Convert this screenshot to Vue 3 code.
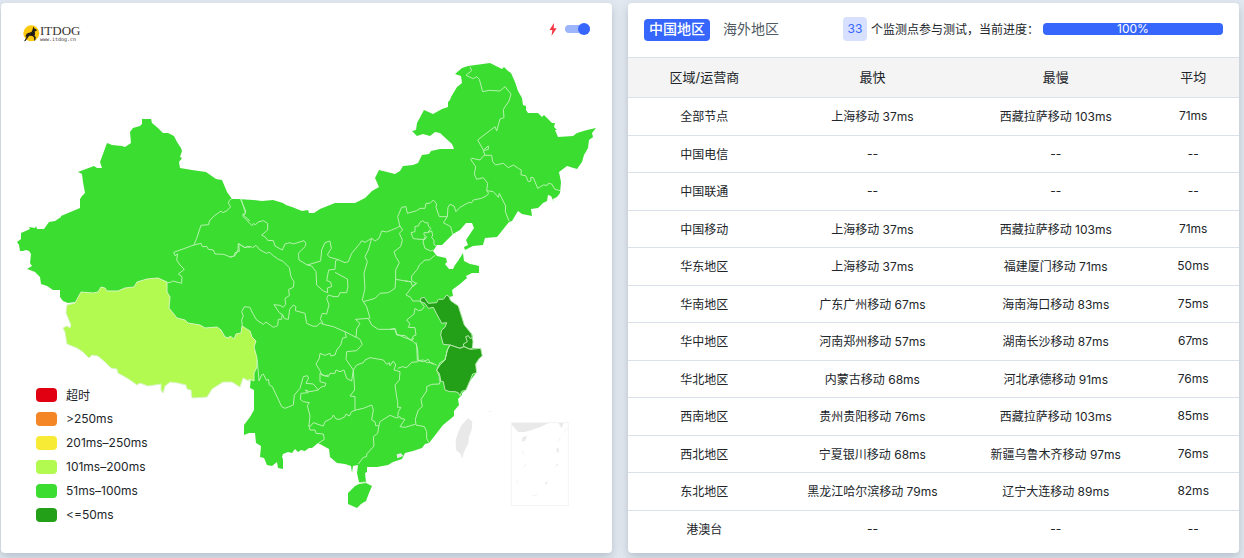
<script setup>
import { ref } from 'vue'

const legend = [
  { label: '超时', tone: 'timeout' },
  { label: '>250ms', tone: 'slow' },
  { label: '201ms–250ms', tone: 'fair' },
  { label: '101ms–200ms', tone: 'good' },
  { label: '51ms–100ms', tone: 'fast' },
  { label: '<=50ms', tone: 'best' }
]

const rows = [
  ['全部节点', '上海移动 37ms', '西藏拉萨移动 103ms', '71ms'],
  ['中国电信', '--', '--', '--'],
  ['中国联通', '--', '--', '--'],
  ['中国移动', '上海移动 37ms', '西藏拉萨移动 103ms', '71ms'],
  ['华东地区', '上海移动 37ms', '福建厦门移动 71ms', '50ms'],
  ['华南地区', '广东广州移动 67ms', '海南海口移动 83ms', '75ms'],
  ['华中地区', '河南郑州移动 57ms', '湖南长沙移动 87ms', '67ms'],
  ['华北地区', '内蒙古移动 68ms', '河北承德移动 91ms', '76ms'],
  ['西南地区', '贵州贵阳移动 76ms', '西藏拉萨移动 103ms', '85ms'],
  ['西北地区', '宁夏银川移动 68ms', '新疆乌鲁木齐移动 97ms', '76ms'],
  ['东北地区', '黑龙江哈尔滨移动 79ms', '辽宁大连移动 89ms', '82ms'],
  ['港澳台', '--', '--', '--']
]

const tabs = ['中国地区', '海外地区']
const activeTab = ref('中国地区')
const fastMode = ref(true)
const progress = 100
</script>

<template>
  <main class="page">
    <section class="card map-card">
      <header class="map-head">
        <a class="logo" href="#">
          <svg class="logo-mark" viewBox="0 0 17 17" aria-hidden="true">
            <circle cx="8.3" cy="8.3" r="8" fill="#fbc90d" />
            <path d="M10.4 1.6 11.4 3.6 13.8 4.8 13.4 5.9 11.8 6.2 12 9.2 11.5 10.7 12.8 12.2 12.2 15.6 11.2 15.5 11 12.6 9.4 11 6.2 10.8 4.8 12.8 2.5 16 1 16.2 3.2 12.8 3.4 11.2 2.2 11.6 3.9 8.6 8.4 7 9.4 5Z" fill="#201b17" />
          </svg>
          <span class="logo-text"><span class="logo-name">ITDOG</span><span class="logo-url">www.itdog.cn</span></span>
        </a>
        <label class="switch">
          <svg class="bolt" viewBox="0 0 8 13" role="img" aria-label="快速模式">
            <path d="M5 0 .5 7H3.4L2.5 13 7.6 5.3H4.7Z" fill="#f5353f" />
          </svg>
          <input v-model="fastMode" type="checkbox" />
        </label>
      </header>

      <svg class="map" viewBox="1 57 611 460" role="img" aria-label="中国地图">
        <path class="fast" d="M68 303 63 301 60 297 60 290 53 290 47 286 41 284 40 277 35 272 30 270 27 269 32 266 30 263 31 254 29 251 26 250 23 251 20 251 19 245 17 242 21 239 21 233 30 229 29 227 35 228 36 226 37 229 44 229 49 222 55 221 61 217 61 216 80 208 80 199 82 196 85 193 83 182 82 174 78 172 94 166 97 168 102 168 100 162 107 143 112 145 122 146 125 147 131 143 130 132 133 128 140 126 142 124 142 119 151 119 152 123 158 128 163 133 168 133 174 136 177 142 181 148 182 151 180 157 182 158 179 162 180 168 192 170 206 172 216 179 222 180 227 192 232 199 238 199 253 200 262 201 273 200 283 203 286 205 292 207 302 211 308 210 309 213 314 213 320 209 335 203 355 203 365 198 372 191 379 187 375 178 379 170 395 174 400 171 403 166 413 165 418 163 422 155 429 154 431 151 440 149 454 149 452 144 440 133 435 132 430 136 423 134 417 136 414 133 412 131 416 130 417 123 424 110 433 114 442 109 448 107 448 102 450 100 451 97 457 87 462 83 461 76 455 74 462 68 468 66 490 63 502 69 504 67 508 71 511 73 515 82 518 91 522 98 523 105 526 106 526 110 528 113 538 113 542 117 544 115 552 123 555 123 554 127 557 130 555 130 558 137 573 136 577 133 587 130 596 128 592 133 593 137 589 140 588 148 584 155 582 162 577 169 567 166 559 172 561 182 560 193 557 197 553 199 554 202 551 196 548 195 547 201 543 203 538 208 531 209 532 216 522 214 518 211 512 221 509 222 497 237 485 238 483 245 473 246 465 250 464 247 468 245 466 240 474 228 472 223 466 223 460 230 453 234 447 240 442 245 437 245 433 251 437 256 446 258 447 262 445 264 449 269 453 269 455 265 458 261 463 253 464 261 470 264 475 265 479 266 479 273 472 273 466 276 467 278 460 284 452 290 453 296 449 297 451 301 458 306 462 317 464 325 472 334 473 338 473 348 481 349 482 356 479 359 476 364 476 373 470 381 466 390 462 393 462 395 458 399 459 405 454 411 454 416 443 425 433 438 429 443 425 444 422 448 413 451 405 453 402 459 393 462 388 465 377 467 367 467 367 472 365 473 366 482 359 482 357 473 358 465 353 466 352 473 351 466 345 464 337 463 330 457 329 449 318 443 312 448 309 448 305 451 301 450 298 452 295 449 292 453 288 452 283 454 282 457 283 459 283 469 278 468 277 462 272 466 267 465 264 458 260 457 261 446 256 443 255 433 249 433 244 435 244 425 250 417 254 410 254 390 250 388 251 375 180 330 90 300Z" />
        <path class="good" d="M254 381 249 379 249 381 243 378 240 387 232 382 223 382 212 389 207 397 192 398 191 390 187 389 186 385 178 383 170 382 165 386 163 393 161 390 161 384 148 386 140 383 137 385 133 382 127 378 118 373 117 369 111 368 105 362 98 356 92 355 89 358 83 352 77 348 67 344 65 332 63 328 67 326 70 328 71 325 66 313 67 305 75 303 81 292 93 293 98 292 101 287 105 288 107 291 118 291 125 288 134 287 137 282 147 279 158 278 167 282 167 292 170 297 169 308 177 318 185 320 188 323 200 325 205 328 217 327 221 330 225 337 229 338 230 336 234 339 236 334 241 333 242 326 250 331 252 337 256 341 254 347 257 358 257 367 254 373Z" />

        <g class="scaled" transform="translate(390 190) scale(.33333)">
          <path class="best" d="M92 325 103 322 115 340 140 338 145 328 160 328 170 315 177 320 182 332 205 348 215 380 223 405 245 432 249 455 247 475 240 478 222 470 210 475 180 465 160 463 152 435 155 420 165 412 170 398 155 400 150 390 140 372 130 352 115 355 105 340 92 335Z" />
          <path class="best" d="M180 465 210 475 222 470 240 478 272 475 277 498 268 505 257 522 260 548 248 552 240 572 228 600 215 604 210 618 205 608 195 605 180 605 165 600 160 575 148 572 148 560 140 540 150 525 165 510 172 480Z" />
          <path class="edge" d="M222 470 220 462 232 455 227 440 235 437 240 445 249 443" />
        </g>

        <g class="borders scaled" transform="translate(0 110) scale(.33333)">
          <path d="M696 266 688 271 685 280 692 290 680 303 668 308 663 303 640 320 628 333 626 344 603 346 590 385 582 405 521 427 525 437 533 432 530 450 540 465 553 478 535 492 546 500 545 520 518 513 510 518 500 517" />
          <path d="M582 405 603 400 607 410 620 409 625 418 640 420 645 432 672 433 690 441 703 438 705 428 718 424 716 401 735 413 742 409 750 413" />
          <path d="M721 266 737 303 735 312 728 313 750 333" />
        </g>

        <g class="borders scaled" transform="translate(230 190) scale(.33333)">
          <path d="M0 202 15 197 24 180 25 161 45 173 60 169 68 173 78 166 90 180 110 190 117 186 130 197 145 208 158 213 178 233 183 260 192 275 190 292 176 298 178 317 165 325 167 343 160 352 150 346 132 344 148 368 158 374 163 386 175 388 179 358 190 345 198 350 196 362 225 370 230 400 250 409 262 408 270 398 280 403" />
          <path d="M37 408 35 390 40 378 35 365 43 350 60 352 68 370 80 390 100 403 108 396 130 412 143 407 145 388 155 388 156 374" />
          <path d="M33 26 46 68 38 78 66 107 70 101 77 104 84 96 100 92 113 100 113 120 95 135 108 143 113 151 130 152 135 168 157 180 165 162 180 158 190 162 222 152 228 160 225 170 205 190 207 210 232 225 272 213 275 180 285 158 300 153 304 175 292 195 300 202 322 208 345 218 355 215 365 190 390 160 395 152 405 157 425 145 435 153 447 145 455 123 470 126 485 120 500 114 510 108" />
          <path d="M232 225 245 228 258 245 260 285 280 303 293 308 292 294 305 290 302 276 290 272 296 240 315 238 317 212 325 208M315 247 352 267 354 290 350 308 330 308 325 320 312 320 295 315 290 325 297 345 290 372 277 370 271 386 280 403 310 410 345 425 378 442 380 417 390 400 376 388 418 385M425 145 415 180 405 200 412 215 402 250 405 295 397 330 410 350 420 385" />
          <path d="M400 335 435 325 450 310 475 308 495 295 497 268M510 108 518 120 508 130 517 150 512 170 492 185 497 200 508 218 497 240 497 268 545 276" />
        </g>

        <g class="borders scaled" transform="translate(360 50) scale(.33333)">
          <path d="M120 530 113 500 125 472 138 470 142 490 170 482 180 475 195 475 198 460 210 460 220 450 230 462 228 472 238 500 262 500 264 472 270 463 282 468 288 485 300 472 325 458 335 458 340 450 365 445 380 437 386 430 380 422 383 400 370 383 350 388 343 372 347 350 332 328 336 325 360 330 372 316 395 316 398 335 407 345 430 340 445 353 460 345 475 355 484 360 483 375 497 377 505 395 513 393 512 382 520 383 533 415 550 405 562 406 565 400 575 402 585 418 601 422" />
          <path d="M262 500 250 518 272 530 278 553M380 422 400 425 415 442 418 430 437 468 436 485 447 513" />
          <path d="M330 50 335 62 318 76 340 86 350 80 358 88 368 125 388 121 420 123 435 110 453 132 447 153 430 178 432 203 420 207 410 243 405 230 353 270 370 300 385 288 385 298 370 302 375 316" />
          <path d="M188 512 195 518 203 518 206 530 213 535 203 548 192 548 192 555 200 560 195 568 180 568 160 566 153 548 165 545 165 530 175 528 180 517ZM203 548 215 543 218 555 215 563 222 570 222 584 230 588M195 560 189 576 195 595 212 603 220 600" />
        </g>

        <g class="borders scaled" transform="translate(390 190) scale(.33333)">
          <path d="M136 195 118 210 105 210 88 225 82 238 65 258 65 272 78 280 68 288 48 315 62 322 68 333 90 333 103 350 95 360 85 362 75 355 72 372 50 390 60 402 55 412 75 413 78 435 70 438 65 450 80 465 82 512 100 510 110 518 125 518 140 526" />
          <path d="M45 273 62 275 68 290 82 278M180 465 172 480 165 510 150 518 140 540M0 418 15 418 20 435 45 437 65 453" />
        </g>

        <g class="borders scaled" transform="translate(230 310) scale(.33333)">
          <path d="M345 65 349 82 338 84 332 105 320 120 315 135 303 138 300 130 285 136 270 130 268 145 258 162 270 182 275 195 295 200 300 190 315 190 318 180 330 185 342 180 350 205 365 213 370 180 348 148 350 125 380 122 397 103 390 88 378 80" />
          <path d="M370 180 380 165 400 158 405 150 420 143 460 150 470 163 478 158 480 167 490 153 497 165 492 180 510 185 508 210 495 225 500 260 503 275 503 292 513 292 505 305 503 320M503 175 518 170 530 173 545 157 565 155M370 180 374 240 360 258 375 260 375 300" />
          <path d="M295 195 285 198 270 190 270 215 288 220 285 228 272 232 265 240 240 245 225 240 235 248 213 250 211 268 220 275 238 278 232 287 240 318 237 345 240 350 250 338 270 345 280 348 285 335 305 325 310 315 318 327 330 328 345 320 348 312 358 318 365 305 378 300 400 295 425 285 430 300 425 330 435 335 437 347 447 347 450 335 480 316 500 324 510 320 512 325 525 328 510 350 525 352 555 343" />
          <path d="M82 150 87 213 95 195 100 192 110 212 115 207 118 225 127 230 155 290 165 295 190 285 193 255 210 235 220 200 232 197 236 204 228 220 250 222 265 240" />
          <path d="M447 347 443 370 430 380 432 408 410 432 410 440 400 442 385 462M558 345 583 350 590 365 590 385 597 398M558 345 556 328 565 300 577 290 573 268 590 243 590 230 605 223 628 222 632 210 628 190 618 180M610 163 600 157 595 148 580 155 565 152 563 120 558 97M415 25 425 45 445 58 480 58 495 55 500 72 522 82 545 90 552 85M236 345 240 360 255 360 258 370 280 372 283 388 265 400M386 518 410 516" />
        </g>

        <path class="fast" d="M366 483 372 486 369 493 366 501 361 504 357 508 348 504 348 493 355 486 359 484Z" />
        <g class="muted scaled" transform="translate(230 310) scale(.33333)">
          <path d="M715 325 727 335 725 360 717 380 715 400 702 425 697 447 692 432 678 420 677 390 685 365 695 345ZM500 433 513 430 520 438 502 445ZM775 305 782 302 781 307Z" />
        </g>
        <g class="muted scaled" transform="translate(440 400) scale(.33333)">
          <path d="M214 68H327L300 82 255 96 235 96 216 76ZM355 68H371L365 85ZM245 125 248 112 262 107 255 122ZM350 144 356 144 356 158 350 156ZM344 203 354 188 354 195ZM313 253 322 242 321 252Z" />
          <path class="inset" d="M214 68H385V317H214ZM382 84 370 98M361 114 354 125M247 152 251 164M259 192 250 203M231 240 233 250M277 286 285 287 292 281" />
        </g>
      </svg>

      <ul class="legend">
        <li v-for="item in legend" :key="item.label">
          <span class="swatch" :class="'swatch-' + item.tone"></span><span class="legend-label">{{ item.label }}</span>
        </li>
      </ul>
    </section>

    <section class="card data-card">
      <header class="data-head">
        <nav class="tabs">
          <button v-for="tab in tabs" :key="tab" type="button" class="tab" :class="{ active: tab === activeTab }" @click="activeTab = tab">{{ tab }}</button>
        </nav>
        <div class="status">
          <span class="count">33</span>
          <span class="status-text">个监测点参与测试，当前进度：</span>
          <div class="track" role="progressbar" aria-label="当前进度" :aria-valuenow="progress">
            <div class="bar" :style="{ width: progress + '%' }">{{ progress }}%</div>
          </div>
        </div>
      </header>
      <table>
        <thead>
          <tr>
            <th class="wide-name">区域/运营商</th>
            <th class="wide">最快</th>
            <th class="wide">最慢</th>
            <th>平均</th>
          </tr>
        </thead>
        <tbody>
          <tr v-for="row in rows" :key="row[0]">
            <td v-for="(cell, i) in row" :key="i">{{ cell }}</td>
          </tr>
        </tbody>
      </table>
    </section>
  </main>
</template>

<style>
body {
  margin: 0;
  background: #e2e8f0;
}
</style>

<style scoped>
* {
  box-sizing: border-box;
}
.page {
  display: flex;
  gap: 16px;
  min-height: 100vh;
  padding: 3px 5px 5px 1px;
  font-family: Inter, "Noto Sans CJK SC", sans-serif;
  font-size: 12px;
  color: #212529;
}
.card {
  position: relative;
  flex: 1 1 0;
  min-width: 0;
  background: #fff;
  border-radius: 4px;
  box-shadow: 0 4px 10px rgba(80, 100, 120, 0.3);
}
.map-head {
  display: flex;
  justify-content: space-between;
  height: 54px;
  padding: 18px 22px 0;
}
.logo {
  display: flex;
  height: 24px;
  align-items: center;
  color: #3a3432;
  text-decoration: none;
}
.logo-mark {
  width: 17px;
  height: 17px;
}
.logo-text {
  display: flex;
  flex-direction: column;
}
.logo-name {
  font: 13px/12px "Liberation Serif", serif;
}
.logo-url {
  font: 5px/5px "DejaVu Sans Mono", monospace;
}
.switch {
  display: flex;
  align-items: center;
  gap: 8px;
  height: 16px;
}
.bolt {
  width: 8px;
  height: 13px;
}
.switch input {
  appearance: none;
  display: flex;
  align-items: center;
  width: 25px;
  height: 8px;
  margin: 0;
  border-radius: 4px;
  background: #9db5fb;
}
.switch input::before {
  content: "";
  width: 12px;
  height: 12px;
  flex: none;
  border-radius: 50%;
  background: #3666fc;
}
.switch input:checked {
  justify-content: flex-end;
}
.map {
  display: block;
  width: 100%;
}
.fast {
  fill: #3bdd31;
}
.good {
  fill: #b2fa50;
  stroke: #d5f5bd;
  stroke-width: 1;
}
.best {
  fill: #239f18;
  stroke: #b9e9b0;
}
.edge {
  fill: none;
  stroke: #b9e9b0;
}
.scaled path {
  vector-effect: non-scaling-stroke;
}
.borders {
  fill: none;
  stroke: #b5f3ad;
  stroke-width: 1;
  stroke-linejoin: round;
}
.muted {
  fill: #e9e9e9;
}
.inset {
  fill: none;
  stroke: #f3f3f3;
}
.legend {
  position: absolute;
  left: 35px;
  bottom: 26px;
  margin: 0;
  padding: 0;
  list-style: none;
}
.legend li {
  display: flex;
  align-items: center;
  gap: 9px;
  height: 24px;
}
.legend-label {
  padding-bottom: 2px;
}
.swatch {
  width: 21px;
  height: 14px;
  border-radius: 4px;
}
.swatch-timeout {
  background: #e00012;
}
.swatch-slow {
  background: #f48626;
}
.swatch-fair {
  background: #f7eb35;
}
.swatch-good {
  background: #b2fa50;
}
.swatch-fast {
  background: #3bdd31;
}
.swatch-best {
  background: #239f18;
}
.data-head {
  display: flex;
  align-items: center;
  justify-content: space-between;
  height: 54px;
  padding: 0 16px 2px;
}
.tabs {
  display: flex;
  gap: 8px;
  padding-top: 2px;
}
.tab {
  height: 22px;
  padding: 0 5px 2px;
  border: 0;
  border-radius: 4px;
  background: none;
  font: 14px/20px Inter, "Noto Sans CJK SC", sans-serif;
  color: #4f5a63;
}
.tab.active {
  background: #3666fc;
  font-weight: 500;
  color: #fff;
}
.status {
  display: flex;
  align-items: center;
}
.count {
  width: 24px;
  height: 24px;
  margin-right: 4px;
  border-radius: 4px;
  background: #d7e0ff;
  color: #3666fc;
  text-align: center;
  line-height: 24px;
}
.status-text {
  width: 172px;
  padding-bottom: 2px;
  white-space: nowrap;
}
.track {
  width: 180px;
  height: 12px;
  border-radius: 4px;
  background: #e9ecef;
}
.bar {
  height: 12px;
  border-radius: 4px;
  background: #3666fc;
  color: #fff;
  text-align: center;
  line-height: 12px;
}
table {
  width: 100%;
  table-layout: fixed;
  border-collapse: separate;
  border-spacing: 0;
  text-align: center;
}
th {
  height: 41px;
  padding: 0 0 2px;
  border-top: 1px solid #d9e2ea;
  border-bottom: 1px solid #d9e2ea;
  background: #f4f4f4;
  font-size: 13px;
  font-weight: 400;
}
.wide-name {
  width: 25%;
}
.wide {
  width: 30%;
}
td {
  height: 38px;
  padding: 0 0 2px;
  border-bottom: 1px solid #d9e2ea;
  white-space: nowrap;
}
tr:nth-child(even) td {
  height: 37px;
}
tr:last-child td {
  border-bottom: 0;
}
</style>
